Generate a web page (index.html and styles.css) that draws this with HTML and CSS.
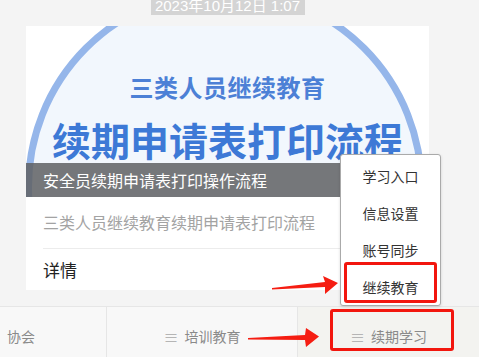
FILE: index.html
```html
<!DOCTYPE html>
<html lang="zh-CN">
<head>
    <meta charset="UTF-8">
    <meta name="viewport" content="width=device-width, initial-scale=1.0">
    <title>继续教育</title>
    <link rel="stylesheet" href="styles.css">
</head>
<body>
    <div class="page">
        <div class="stamp-row">
            <span class="stamp">2023年10月12日 1:07</span>
        </div>

        <div class="card">
            <div class="cover">
                <div class="ring"></div>
                <div class="cover-sub">三类人员继续教育</div>
                <div class="cover-title">续期申请表打印流程</div>
                <div class="cover-bar">安全员续期申请表打印操作流程</div>
            </div>
            <div class="card-row desc">三类人员继续教育续期申请表打印流程</div>
            <div class="card-row more">详情</div>
        </div>

        <nav class="tabbar">
            <div class="tab tab-left">协会</div>
            <div class="tab tab-mid"><span class="burger">≡</span>培训教育</div>
            <div class="tab tab-right"><span class="burger">≡</span>续期学习</div>
        </nav>

        <!-- popup menu over the tabbar -->
        <div class="menu">
            <div class="menu-item">学习入口</div>
            <div class="menu-item">信息设置</div>
            <div class="menu-item">账号同步</div>
            <div class="menu-item">继续教育</div>
        </div>

        <!-- red annotations -->
        <div class="mark mark-menu"></div>
        <div class="mark mark-tab"></div>
        <svg class="arrow arrow-menu" width="70" height="22" viewBox="0 0 70 22">
            <polygon points="0,13 53,7 51,1 66,8 53,19 53,12 0,14.5" fill="#f51d12"/>
        </svg>
        <svg class="arrow arrow-tab" width="74" height="22" viewBox="0 0 74 22">
            <polygon points="0,11 57,8 58,1 71,9.5 58,20 57,13 0,12.5" fill="#f51d12"/>
        </svg>
    </div>
</body>
</html>
```

FILE: styles.css
```css
body, html {
    margin: 0;
    padding: 0;
    height: 100%;
    overflow: hidden;
    background-color: #f4f4f4;
    font-family: "Liberation Sans", "Noto Sans CJK SC", sans-serif;
    color: #333;
}

.page {
    position: relative;
    height: 100%;
    display: flex;
    flex-direction: column;
}

.page > * {
    flex-shrink: 0;
}

.stamp-row {
    display: flex;
    justify-content: center;
    height: 15px;
    overflow: hidden;
    padding-right: 23px;
}

.stamp {
    display: block;
    margin-top: -3px;
    padding: 0 5px 0 4px;
    height: 18px;
    line-height: 18px;
    font-size: 15px;
    color: #fff;
    background-color: #d4d4d4;
}

.card {
    margin: 11px 0 0 26px;
    width: 403px;
    background-color: #fff;
}

.cover {
    position: relative;
    height: 171px;
    overflow: hidden;
    display: flex;
    flex-direction: column;
    align-items: center;
    background-color: #fff;
}

.ring {
    position: absolute;
    left: -1px;
    top: -39px;
    width: 400px;
    height: 400px;
    box-sizing: border-box;
    border-radius: 50%;
    border: 7px solid #95b6ea;
    background-color: #f2f7fd;
}

.cover-sub {
    position: relative;
    margin-top: 47px;
    font-family: "Noto Sans CJK SC", sans-serif;
    font-size: 24px;
    line-height: 28px;
    font-weight: 700;
    color: #4c80d6;
    letter-spacing: 0.5px;
}

.cover-title {
    position: relative;
    margin-top: 17px;
    font-family: "Noto Sans CJK SC", sans-serif;
    font-size: 39px;
    line-height: 42px;
    font-weight: 700;
    color: #3d79d6;
}

.cover-bar {
    position: absolute;
    left: 0;
    right: 0;
    bottom: 0;
    height: 34px;
    line-height: 34px;
    padding-left: 17px;
    font-family: "Noto Sans CJK SC", sans-serif;
    font-size: 16px;
    color: #fff;
    background-color: rgba(95, 96, 99, 0.85);
}

.card-row {
    margin: 0 17px;
    font-family: "Noto Sans CJK SC", sans-serif;
    font-size: 16px;
}

.desc {
    height: 51px;
    line-height: 51px;
    color: #a3a3a3;
    border-bottom: 1px solid #ececec;
}

.more {
    height: 41px;
    line-height: 41px;
    font-size: 17px;
    color: #222;
}

.tabbar {
    margin-top: 16px;
    display: flex;
    height: 60px;
    border-top: 1px solid #e6e6e6;
    background-color: #f8f8f8;
    font-family: "Noto Sans CJK SC", sans-serif;
    font-size: 14px;
    color: #8a8a8a;
}

.tab {
    display: flex;
    align-items: center;
    justify-content: center;
    padding-bottom: 2px;
}

.tab-left {
    width: 107px;
    justify-content: flex-start;
    padding-left: 7px;
    box-sizing: border-box;
    border-right: 1px solid #e6e6e6;
}

.tab-mid {
    width: 190px;
    border-right: 1px solid #e6e6e6;
}

.tab-right {
    flex: 1;
    background-color: #f3f3f0;
}

.burger {
    margin-right: 6px;
    color: #b5b5b5;
    font-size: 15px;
}

.menu {
    position: absolute;
    left: 340px;
    top: 154px;
    width: 101px;
    box-sizing: border-box;
    padding-top: 3px;
    height: 152px;
    background-color: #fff;
    border: 1px solid #aaa;
    border-radius: 3px;
    box-shadow: 0 1px 3px rgba(0, 0, 0, 0.15);
    display: flex;
    flex-direction: column;
    align-items: center;
}

.menu-item {
    height: 37px;
    line-height: 37px;
    font-family: "Noto Sans CJK SC", sans-serif;
    font-size: 14px;
    color: #333;
}

.mark {
    position: absolute;
    box-sizing: border-box;
    border: 3px solid #f2160e;
    border-radius: 3px;
}

.mark-menu {
    left: 344px;
    top: 262px;
    width: 93px;
    height: 41px;
}

.mark-tab {
    left: 330px;
    top: 309px;
    width: 124px;
    height: 42px;
}

.arrow {
    position: absolute;
}

.arrow-menu {
    left: 272px;
    top: 275px;
}

.arrow-tab {
    left: 248px;
    top: 327px;
}
```
